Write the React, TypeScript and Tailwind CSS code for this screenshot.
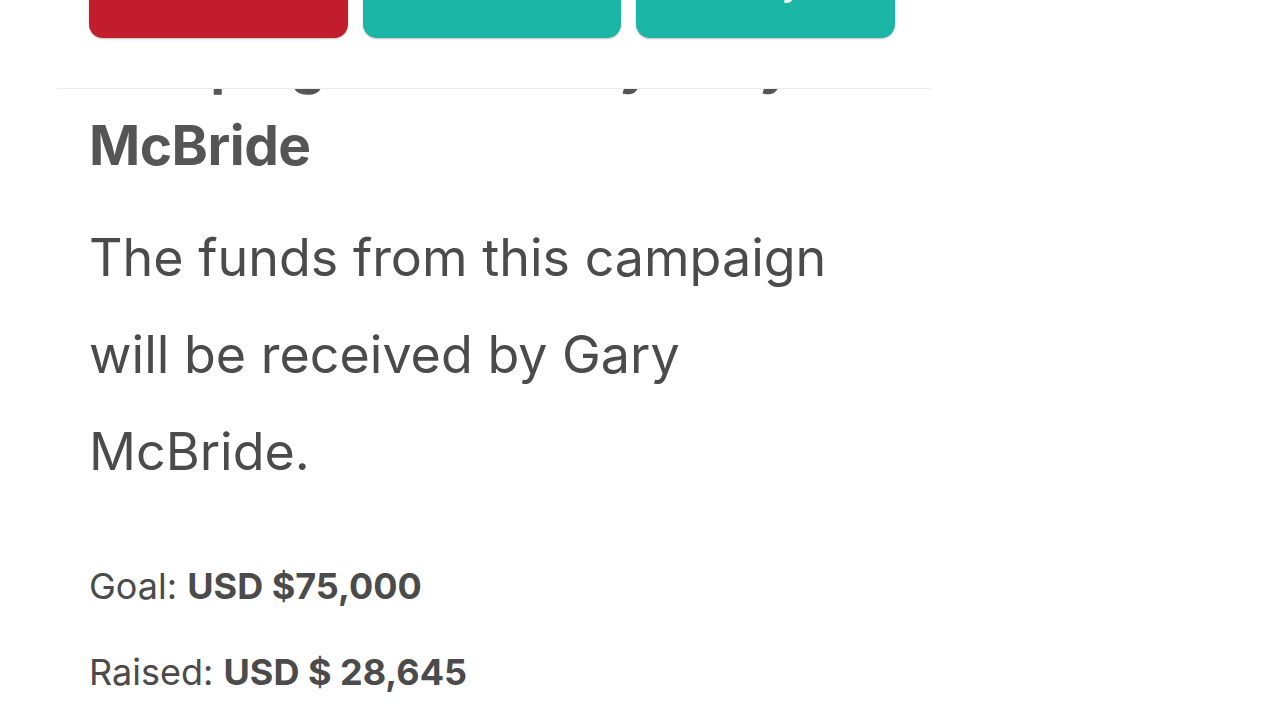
import React from 'react';

const actions = [
  { label: 'Give', style: 'bg-[#c11d2d]' },
  { label: 'Share', style: 'bg-[#1ab5a4]' },
  { label: 'Pray', style: 'bg-[#1ab5a4]' },
];

const App: React.FC = () => {
  return (
    <div className="min-h-[720px] w-full overflow-hidden bg-white font-['Inter','Liberation_Sans',sans-serif]">
      <div className="ml-[57px] w-[873px]">
        <div className="relative z-10 -mt-[60px] border-b border-[#ececec] bg-white pl-[32px] pr-[35px] pb-[50px]">
          <div className="grid grid-cols-3 gap-[15px]">
            {actions.map(a => (
              <button
                key={a.label}
                className={`flex h-[98px] items-center justify-center rounded-[14px] pb-[8px] text-[32px] font-semibold text-white shadow-[0_1px_2px_rgba(0,0,0,0.25)] ${a.style}`}
              >
                {a.label}
              </button>
            ))}
          </div>
        </div>

        <div className="-mt-[67px] px-[32px]">
          <h2 className="text-[55px] font-bold leading-[82px] tracking-[-0.5px] text-[#555555]">
            Campaign created by Gary
            <br />
            McBride
          </h2>
          <p className="mt-[23px] w-[745px] text-[52px] leading-[97px] text-[#4b4b4b]">
            The funds from this campaign will be received by Gary McBride.
          </p>
          <div className="mt-[43px] text-[36px] leading-[86px] text-[#4b4b4b]">
            <p>
              Goal: <span className="font-bold">USD $75,000</span>
            </p>
            <p>
              Raised: <span className="font-bold">USD $ 28,645</span>
            </p>
          </div>
        </div>
      </div>
    </div>
  );
};

export default App;
